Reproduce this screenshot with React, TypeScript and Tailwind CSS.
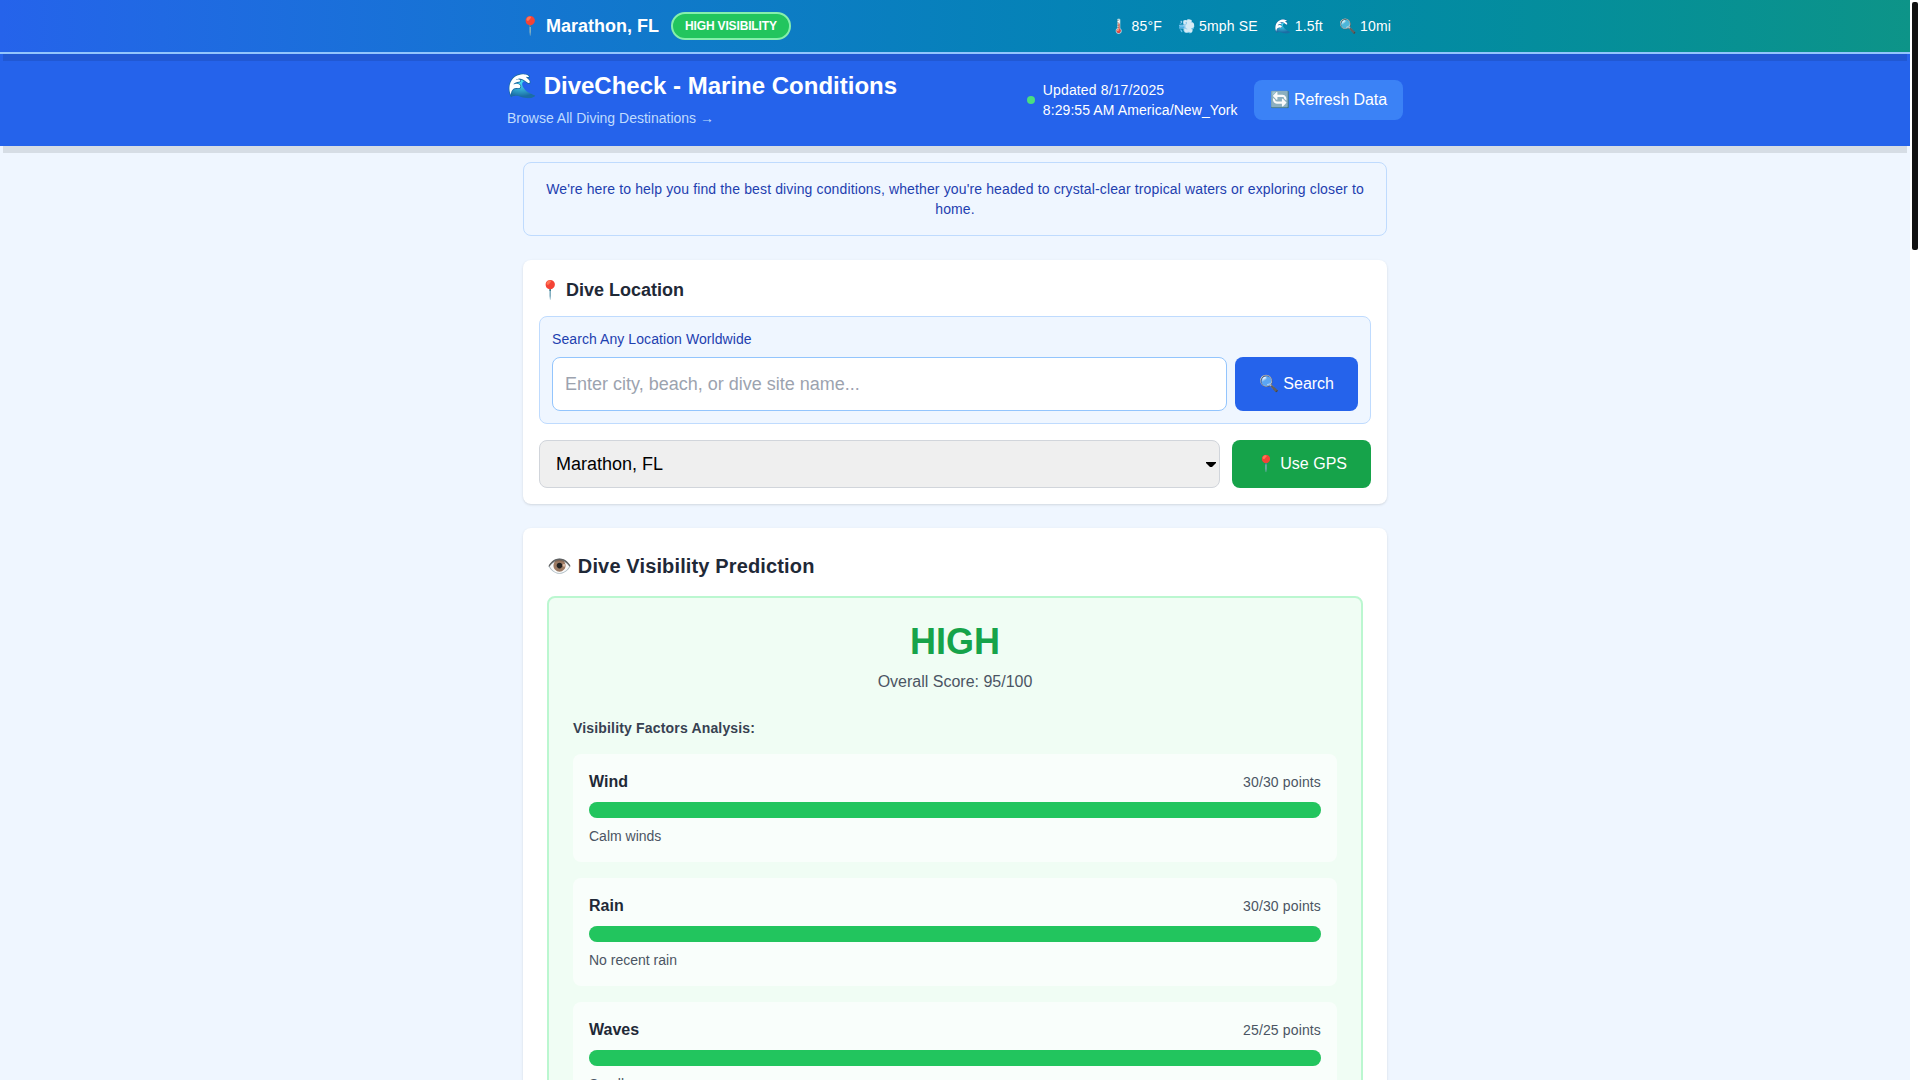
const factors = [
  { name: "Wind", points: "30/30 points", note: "Calm winds" },
  { name: "Rain", points: "30/30 points", note: "No recent rain" },
  { name: "Waves", points: "25/25 points", note: "Small waves" },
];

const stats = ["🌡️ 85°F", "💨 5mph SE", "🌊 1.5ft", "🔍 10mi"];

export default function App() {
  return (
    <div className="flex h-screen overflow-hidden bg-white font-['Liberation_Sans',Arial,sans-serif]">
      <div className="w-[1910px] shrink-0 overflow-hidden bg-[#eff6ff] text-[#111827]">
        <div className="relative z-10 border-b-2 border-[#93c5fd] bg-gradient-to-r from-[#2563eb] to-[#0d9488] text-white shadow-[0_10px_0_-3px_rgba(0,0,0,0.1)]">
          <div className="mx-auto flex max-w-4xl items-center justify-between px-3 py-3">
            <div className="flex items-center gap-3">
              <span className="text-lg font-bold">📍 Marathon, FL</span>
              <span className="rounded-full border-2 border-[#86efac] bg-[#22c55e] px-3 py-1 text-xs font-bold tracking-[-0.15px]">HIGH VISIBILITY</span>
            </div>
            <div className="flex items-center gap-4 text-sm tracking-[0.15px]">
              {stats.map((s) => (
                <span key={s}>{s}</span>
              ))}
            </div>
          </div>
        </div>

        <header className="relative bg-[#2563eb] text-white shadow-[0_10px_0_-3px_rgba(0,0,0,0.1)]">
          <div className="mx-auto flex max-w-4xl items-center justify-between py-4">
            <div>
              <h1 className="text-2xl font-bold">🌊 DiveCheck - Marine Conditions</h1>
              <a className="mt-[6px] mb-[2px] block text-sm text-[#bfdbfe]">Browse All Diving Destinations →</a>
            </div>
            <div className="flex items-center gap-4">
              <div className="flex items-center gap-2 text-sm">
                <span className="h-2 w-2 rounded-full bg-[#4ade80]" />
                <div className="tracking-[0.09px]">
                  <div className="tracking-[0.14px]">Updated 8/17/2025</div>
                  <div>8:29:55 AM America/New_York</div>
                </div>
              </div>
              <button className="rounded-lg bg-[#3b82f6] px-4 py-2 text-base tracking-[-0.1px] text-white">🔄 Refresh Data</button>
            </div>
          </div>
        </header>

        <main className="mx-auto max-w-4xl px-4 py-4">
          <div className="mb-6 rounded-lg border border-[#bfdbfe] bg-[#eff6ff] p-4 text-center text-sm tracking-[0.13px] text-[#1e40af]">
            We're here to help you find the best diving conditions, whether you're headed to crystal-clear tropical waters or exploring closer to home.
          </div>

          <section className="mb-6 rounded-lg bg-white p-4 shadow-sm">
            <h2 className="mb-3 text-lg font-semibold text-[#1f2937]">📍 Dive Location</h2>
            <div className="mb-4 rounded-lg border border-[#bfdbfe] bg-[#eff6ff] p-3">
              <label className="mb-2 block text-sm font-medium tracking-[0.08px] text-[#1e40af]">Search Any Location Worldwide</label>
              <div className="flex gap-2">
                <input
                  className="min-w-0 flex-1 rounded-lg border border-[#93c5fd] bg-white px-3 py-3 text-lg placeholder:text-[#9ca3af]"
                  placeholder="Enter city, beach, or dive site name..."
                />
                <button className="rounded-lg bg-[#2563eb] px-6 py-3 text-base text-white">🔍 Search</button>
              </div>
            </div>
            <div className="flex gap-3">
              <div className="relative min-w-0 flex-1">
                <select className="h-12 w-full appearance-none rounded-lg border border-[#d1d5db] bg-[#efefef] px-4 text-lg text-black" defaultValue="Marathon, FL">
                  <option>Marathon, FL</option>
                </select>
                <svg className="pointer-events-none absolute right-[4px] top-[22px] h-[5px] w-[10px]" viewBox="0 0 10 5">
                  <path d="M0 0H10V1L6 5H4L0 1Z" fill="#000" />
                </svg>
              </div>
              <button className="rounded-lg bg-[#16a34a] px-6 py-3 text-base text-white">📍 Use GPS</button>
            </div>
          </section>

          <section className="rounded-lg bg-white p-6 shadow-sm">
            <h2 className="mb-4 text-xl font-semibold tracking-[0.14px] text-[#1f2937]">👁️ Dive Visibility Prediction</h2>
            <div className="rounded-lg border-2 border-[#bbf7d0] bg-[#f0fdf4] p-6">
              <div className="mb-6 text-center">
                <div className="mb-2 text-4xl font-bold text-[#16a34a]">HIGH</div>
                <div className="text-base text-[#4b5563]">Overall Score: 95/100</div>
              </div>
              <h3 className="mb-4 text-sm font-semibold tracking-[0.17px] text-[#374151]">Visibility Factors Analysis:</h3>
              <div className="flex flex-col gap-4">
                {factors.map((f) => (
                  <div key={f.name} className="rounded-lg bg-white/60 p-4">
                    <div className="mb-2 flex items-center justify-between">
                      <span className="text-base font-semibold text-[#1f2937]">{f.name}</span>
                      <span className="text-sm tracking-[0.14px] text-[#4b5563]">{f.points}</span>
                    </div>
                    <div className="mb-2 h-4 w-full rounded-full bg-[#e5e7eb]">
                      <div className="h-4 w-full rounded-full bg-[#22c55e]" />
                    </div>
                    <div className="text-sm text-[#4b5563]">{f.note}</div>
                  </div>
                ))}
              </div>
            </div>
          </section>
        </main>
      </div>
      <div className="flex h-full w-[10px] shrink-0 justify-center bg-white pt-[2px]">
        <div className="h-[248px] w-[6px] rounded-[2px] bg-[#111111]" />
      </div>
    </div>
  );
}
